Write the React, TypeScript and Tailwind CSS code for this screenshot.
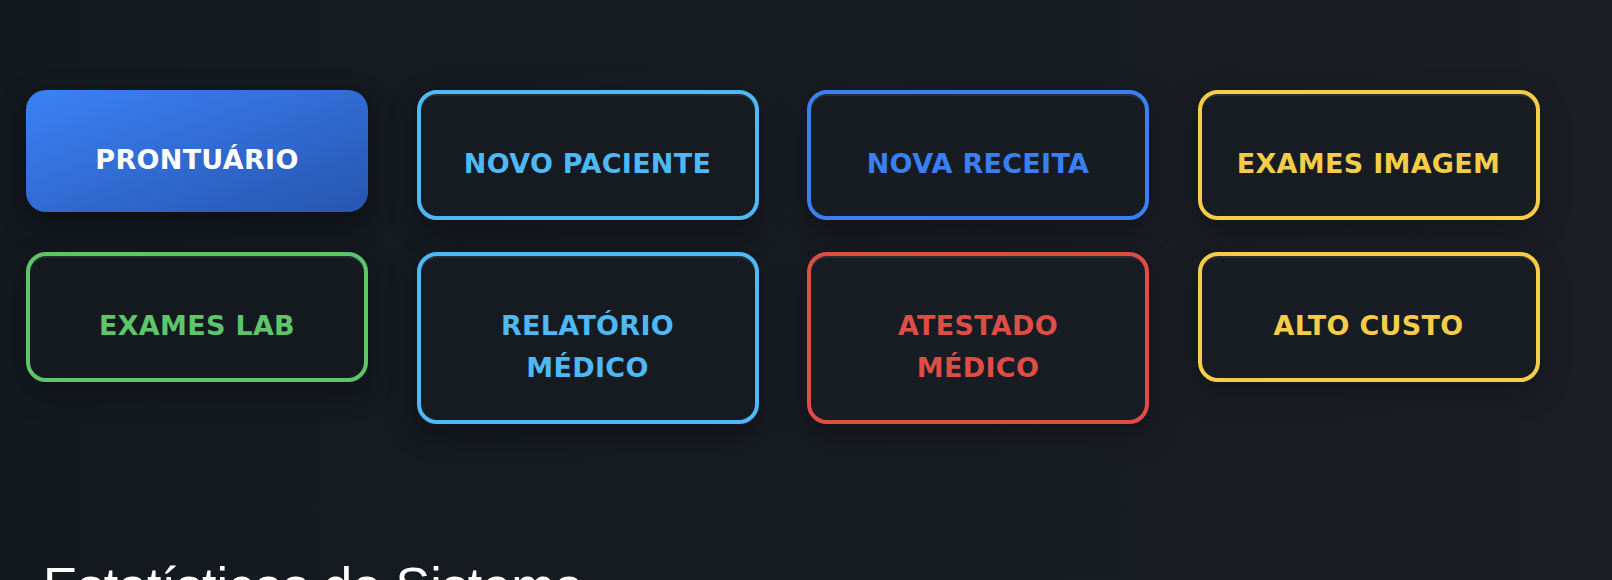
import React from 'react';

type Action = {
  label: string;
  lines?: string[];
  tone: 'primary' | 'sky' | 'blue' | 'yellow' | 'green' | 'red';
};

const actions: Action[] = [
  { label: 'PRONTUÁRIO', tone: 'primary' },
  { label: 'NOVO PACIENTE', tone: 'sky' },
  { label: 'NOVA RECEITA', tone: 'blue' },
  { label: 'EXAMES IMAGEM', tone: 'yellow' },
  { label: 'EXAMES LAB', tone: 'green' },
  { label: 'RELATÓRIO MÉDICO', lines: ['RELATÓRIO', 'MÉDICO'], tone: 'sky' },
  { label: 'ATESTADO MÉDICO', lines: ['ATESTADO', 'MÉDICO'], tone: 'red' },
  { label: 'ALTO CUSTO', tone: 'yellow' },
];

const toneClass: Record<Action['tone'], string> = {
  primary:
    'bg-gradient-to-br from-[#3b82f6] to-[#2756b0] text-white shadow-[0_10px_28px_rgba(0,0,0,0.45)]',
  sky: 'border-4 border-[#4fb9f6] text-[#4fb9f6] bg-[#161b22]',
  blue: 'border-4 border-[#3a80f2] text-[#3a80f2] bg-[#171c23]',
  yellow: 'border-4 border-[#f6cd48] text-[#f6cd48] bg-[#181c23]',
  green: 'border-4 border-[#5fc56b] text-[#5fc56b] bg-[#151a21]',
  red: 'border-4 border-[#df4d47] text-[#df4d47] bg-[#181c23]',
};

function ActionCard({ action }: { action: Action }) {
  const lines = action.lines ?? [action.label];
  const outlined = action.tone !== 'primary';
  return (
    <button
      className={`w-[342px] rounded-[20px] pt-[49px] pb-[31px] text-center font-bold text-[27px] leading-[42px] tracking-[0.3px] ${toneClass[action.tone]} ${
        outlined ? 'shadow-[inset_0_2px_0_rgba(255,255,255,0.08),0_10px_30px_rgba(0,0,0,0.3)]' : ''
      }`}
      style={{ fontFamily: '"DejaVu Sans", Verdana, sans-serif' }}
    >
      {lines.map((l) => (
        <div key={l}>{l}</div>
      ))}
    </button>
  );
}

export default function App() {
  return (
    <div className="h-screen w-full overflow-hidden bg-gradient-to-r from-[#141920] via-[#171b22] to-[#1b1f24]">
      <div className="pl-[26px] pt-[90px]">
        <div className="grid grid-cols-[repeat(4,342px)] gap-x-[48.5px] gap-y-[32px] items-start">
          {actions.map((a) => (
            <ActionCard key={a.label} action={a} />
          ))}
        </div>
        <h2
          className="mt-[136px] pl-[17px] text-[52px] font-light leading-none text-white"
          style={{ fontFamily: '"Liberation Sans", Arial, sans-serif' }}
        >
          Estatísticas do Sistema
        </h2>
      </div>
    </div>
  );
}
